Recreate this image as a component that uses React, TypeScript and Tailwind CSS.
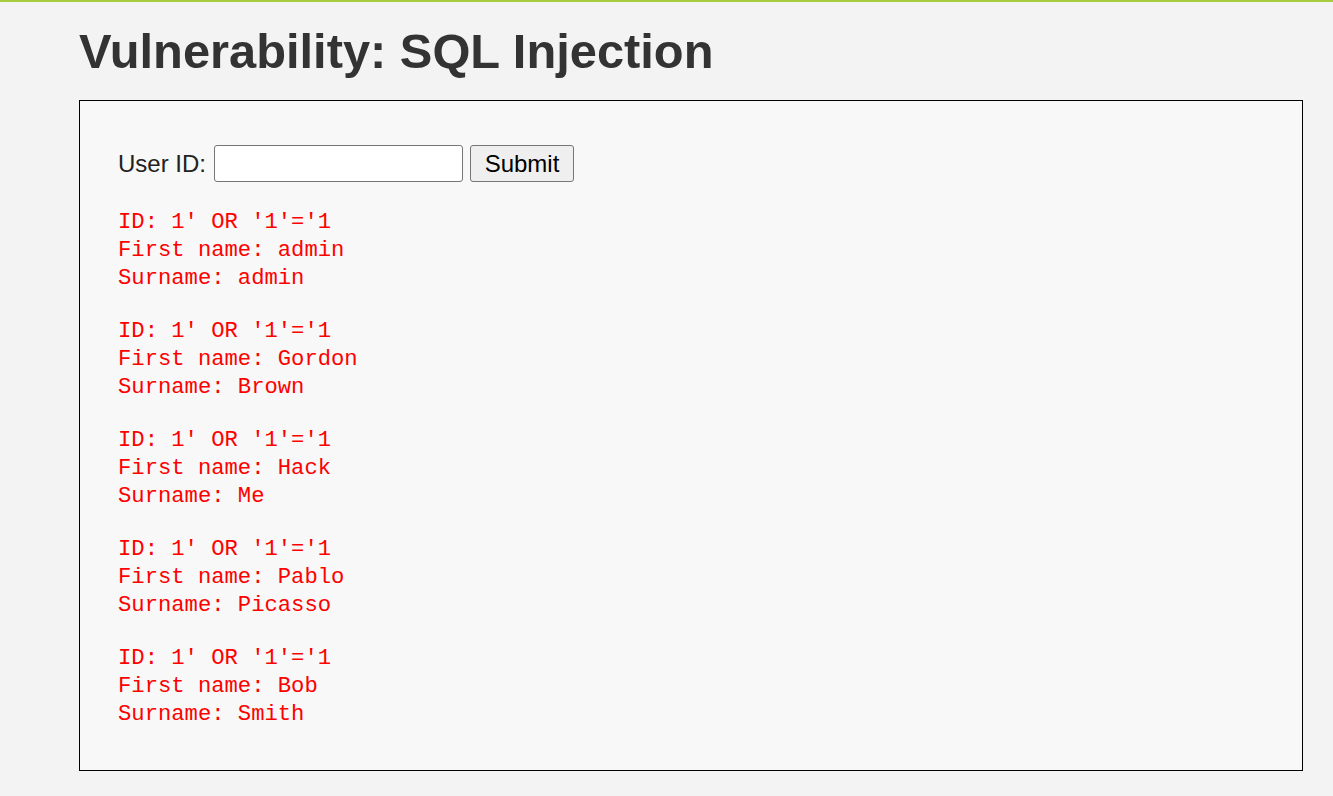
import { useState } from "react";

const rows = [
  { first: "admin", last: "admin" },
  { first: "Gordon", last: "Brown" },
  { first: "Hack", last: "Me" },
  { first: "Pablo", last: "Picasso" },
  { first: "Bob", last: "Smith" },
];

const App = () => {
  const [userId, setUserId] = useState("");

  return (
    <div className="min-h-[796px] bg-[#f3f3f3] border-t-2 border-[#a6cb3d] font-['Liberation_Sans',Arial,sans-serif]">
      <h1 className="pl-[79px] pt-[22px] text-[48.8px] leading-[55px] font-bold text-[#333333]">
        Vulnerability: SQL Injection
      </h1>

      <div className="mt-[21px] ml-[79px] mr-[30px] h-[671px] border border-black bg-[#f7f8f7] pl-[38px] pt-[44px]">
        <form
          className="flex items-center h-[37px] text-[24px] text-[#222222]"
          onSubmit={(e) => e.preventDefault()}
        >
          <label htmlFor="uid">User ID:</label>
          <input
            id="uid"
            value={userId}
            onChange={(e) => setUserId(e.target.value)}
            className="ml-[8px] w-[249px] h-[37px] bg-white border border-[#767676] rounded-[3px] px-1 outline-none"
          />
          <button
            type="submit"
            className="ml-[7px] w-[104px] h-[37px] bg-[#efefef] border border-[#767676] rounded-[3px] text-black text-[24px] leading-none"
          >
            Submit
          </button>
        </form>

        <div className="mt-[27px] flex flex-col gap-[25px]">
          {rows.map((r, i) => (
            <pre
              key={i}
              className="font-['Liberation_Mono','DejaVu_Sans_Mono',monospace] text-[22.2px] leading-[28px] text-[#ff0000]"
            >
              {"ID: 1' OR '1'='1\nFirst name: " + r.first + "\nSurname: " + r.last}
            </pre>
          ))}
        </div>
      </div>
    </div>
  );
};

export default App;
